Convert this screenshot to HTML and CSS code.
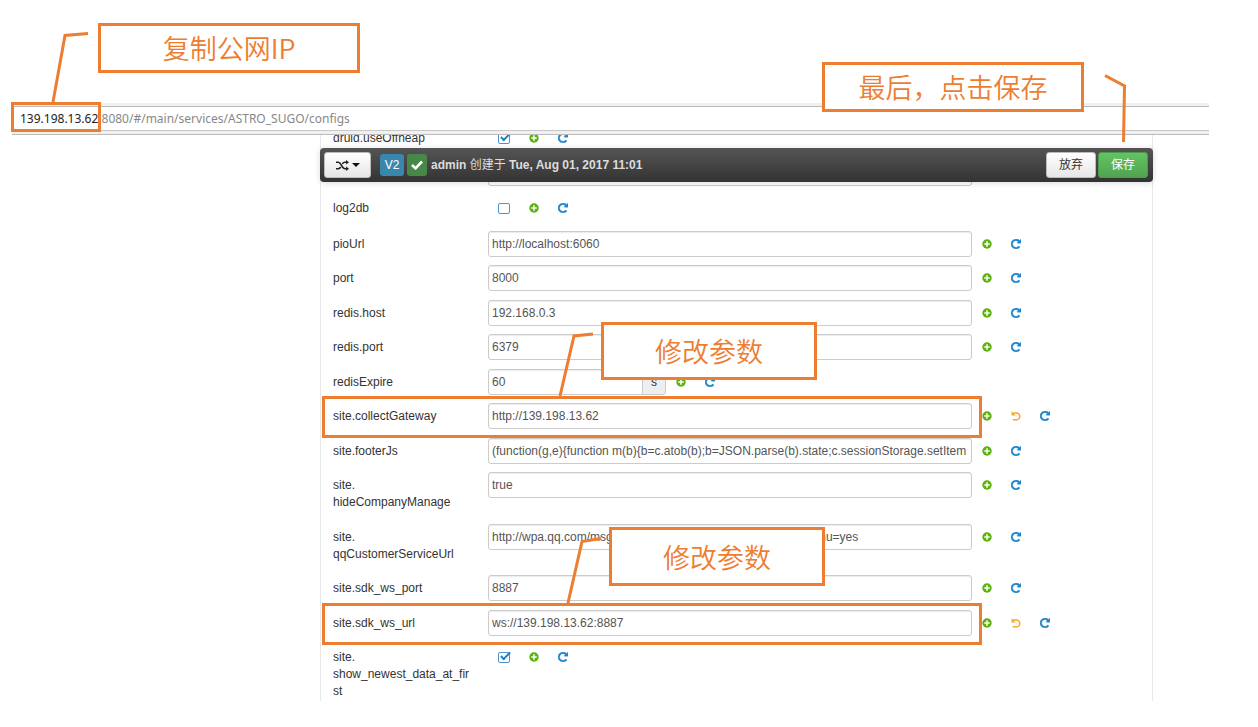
FILE: index.html
```html
<!DOCTYPE html>
<html lang="zh-CN">
<head>
<meta charset="utf-8">
<title>ASTRO_SUGO configs</title>
<link rel="stylesheet" href="styles.css">
</head>
<body>
<svg class="sprite" aria-hidden="true">
  <symbol id="plus" viewBox="0 0 10 10"><circle cx="5" cy="5" r="4.700"/><path d="M5 2.300v5.400M2.300 5h5.400" stroke="#fff" stroke-width="1.500"/></symbol>
  <symbol id="redo" viewBox="128 128 1536 1536"><path stroke="currentColor" stroke-width="60" d="M1664 256v448q0 26-19 45t-45 19h-448q-42 0-59-40-17-39 14-69l138-138q-148-137-349-137-104 0-198.500 40.500t-163.500 109.500-109.500 163.500-40.500 198.500 40.500 198.500 109.500 163.500 163.500 109.500 198.500 40.500q119 0 225-52t179-147q7-10 23-12 15 0 25 9l137 138q9 8 9.500 20.500t-7.500 22.500q-109 132-264 204.500t-327 72.500q-156 0-298-61t-245-164-164-245-61-298 61-298 164-245 245-164 298-61q147 0 284.500 55.500t244.500 156.500l130-129q29-31 70-14 39 17 39 59z"/></symbol>
  <symbol id="undo" viewBox="0 0 10 10"><path d="M2 2H5.400a3.400 3.400 0 0 1 0 6.800H1.800" fill="none" stroke="currentColor" stroke-width="1.600"/><path d="M.5.200v4.300h4.300z"/></symbol>
</svg>

<div class="address">
  <div class="url"><span class="host">139.198.13.62</span>:8080/#/main/services/ASTRO_SUGO/configs</div>
</div>

<main class="panel">
  <header class="toolbar">
    <button class="btn compare" aria-label="比较">
      <svg width="13" height="11" viewBox="0 0 12 10" fill="none" stroke="#222" stroke-width="1.500"><path d="M0 2h2.200c2.800 0 3 6 6 6H10M0 8h2.200c1 0 1.600-.7 2.100-1.600M5.800 3.500C6.400 2.600 7 2 8.200 2H10"/><path d="M9.300 0v4l2.700-2zM9.300 6v4L12 8z" fill="#222" stroke="none"/></svg>
      <span class="caret"></span>
    </button>
    <span class="tag version">V2</span>
    <span class="tag current"><svg width="12" height="10" viewBox="0 0 12 10"><path d="M1 5l3.500 3.300L11 1.500" fill="none" stroke="#fff" stroke-width="2.600"/></svg></span>
    <span class="created"><b>admin</b> 创建于 <b>Tue, Aug 01, 2017 11:01</b></span>
    <button class="btn discard">放弃</button>
    <button class="btn save">保存</button>
  </header>

  <div class="clip">
  <form class="rows">
    <div class="row"><label for="f1">druid.useOffheap</label><span class="check"><input id="f1" type="checkbox" checked></span>
      <button type="button" class="icon add" aria-label="add"><svg><use href="#plus"/></svg></button><button type="button" class="icon redo" aria-label="refresh"><svg><use href="#redo"/></svg></button></div>
    <div class="row"><span class="name"></span><input class="field" aria-label="value" type="text"></div>
    <div class="row tall"><label for="f3">log2db</label><span class="check"><input id="f3" type="checkbox"></span>
      <button type="button" class="icon add" aria-label="add"><svg><use href="#plus"/></svg></button><button type="button" class="icon redo" aria-label="refresh"><svg><use href="#redo"/></svg></button></div>
    <div class="row"><label for="f4">pioUrl</label><input id="f4" class="field" type="text" value="http://localhost:6060">
      <button type="button" class="icon add" aria-label="add"><svg><use href="#plus"/></svg></button><button type="button" class="icon redo" aria-label="refresh"><svg><use href="#redo"/></svg></button></div>
    <div class="row"><label for="f5">port</label><input id="f5" class="field" type="text" value="8000">
      <button type="button" class="icon add" aria-label="add"><svg><use href="#plus"/></svg></button><button type="button" class="icon redo" aria-label="refresh"><svg><use href="#redo"/></svg></button></div>
    <div class="row"><label for="f6">redis.host</label><input id="f6" class="field" type="text" value="192.168.0.3">
      <button type="button" class="icon add" aria-label="add"><svg><use href="#plus"/></svg></button><button type="button" class="icon redo" aria-label="refresh"><svg><use href="#redo"/></svg></button></div>
    <div class="row"><label for="f7">redis.port</label><input id="f7" class="field" type="text" value="6379">
      <button type="button" class="icon add" aria-label="add"><svg><use href="#plus"/></svg></button><button type="button" class="icon redo" aria-label="refresh"><svg><use href="#redo"/></svg></button></div>
    <div class="row"><label for="f8">redisExpire</label><input id="f8" class="field short" type="text" value="60"><span class="unit">s</span>
      <button type="button" class="icon add" aria-label="add"><svg><use href="#plus"/></svg></button><button type="button" class="icon redo" aria-label="refresh"><svg><use href="#redo"/></svg></button></div>
    <div class="row marked"><label for="f9">site.collectGateway</label><input id="f9" class="field" type="text" value="http://139.198.13.62">
      <button type="button" class="icon add" aria-label="add"><svg><use href="#plus"/></svg></button><button type="button" class="icon undo" aria-label="undo"><svg><use href="#undo"/></svg></button><button type="button" class="icon redo" aria-label="refresh"><svg><use href="#redo"/></svg></button></div>
    <div class="row"><label for="f10">site.footerJs</label><input id="f10" class="field" type="text" value="(function(g,e){function m(b){b=c.atob(b);b=JSON.parse(b).state;c.sessionStorage.setItem">
      <button type="button" class="icon add" aria-label="add"><svg><use href="#plus"/></svg></button><button type="button" class="icon redo" aria-label="refresh"><svg><use href="#redo"/></svg></button></div>
    <div class="row"><label for="f11">site.<wbr>hideCompanyManage</label><input id="f11" class="field" type="text" value="true">
      <button type="button" class="icon add" aria-label="add"><svg><use href="#plus"/></svg></button><button type="button" class="icon redo" aria-label="refresh"><svg><use href="#redo"/></svg></button></div>
    <div class="row"><label for="f12">site.<wbr>qqCustomerServiceUrl</label><input id="f12" class="field" type="text" value="http://wpa.qq.com/msgrd?v=3&amp;uin=2454134718&amp;site=qq&amp;menu=yes">
      <button type="button" class="icon add" aria-label="add"><svg><use href="#plus"/></svg></button><button type="button" class="icon redo" aria-label="refresh"><svg><use href="#redo"/></svg></button></div>
    <div class="row"><label for="f13">site.sdk_ws_port</label><input id="f13" class="field" type="text" value="8887">
      <button type="button" class="icon add" aria-label="add"><svg><use href="#plus"/></svg></button><button type="button" class="icon redo" aria-label="refresh"><svg><use href="#redo"/></svg></button></div>
    <div class="row marked"><label for="f14">site.sdk_ws_url</label><input id="f14" class="field" type="text" value="ws://139.198.13.62:8887">
      <button type="button" class="icon add" aria-label="add"><svg><use href="#plus"/></svg></button><button type="button" class="icon undo" aria-label="undo"><svg><use href="#undo"/></svg></button><button type="button" class="icon redo" aria-label="refresh"><svg><use href="#redo"/></svg></button></div>
    <div class="row"><label for="f15">site.<wbr>show_newest_data_at_first</label><span class="check"><input id="f15" type="checkbox" checked></span>
      <button type="button" class="icon add" aria-label="add"><svg><use href="#plus"/></svg></button><button type="button" class="icon redo" aria-label="refresh"><svg><use href="#redo"/></svg></button></div>
  </form>
  </div>
</main>

<svg class="leaders" width="1258" height="727" viewBox="0 0 1258 727" aria-hidden="true">
  <path d="M53 102L65 35.500 88 33.500M1105 75.500L1124.500 86 1123.500 142M560 396L574 336 593 334M568 603L582 541.500 601 538.500"/>
</svg>
<div class="callout host-frame"></div>
<div class="callout copy-ip">复制公网IP</div>
<div class="callout save-last">最后，点击保存</div>
<div class="callout edit-gateway">修改参数</div>
<div class="callout edit-ws">修改参数</div>
</body>
</html>
```
FILE: styles.css
```css
*, *::before, *::after { box-sizing: border-box; }
body {
  margin: 0;
  padding: 103px 0 26px;
  min-height: 100vh;
  position: relative;
  display: flex;
  flex-direction: column;
  background: #fff;
  color: #333;
  font: 12px/17px "Liberation Sans", "Noto Sans CJK SC", sans-serif;
}
.sprite { position: absolute; width: 0; height: 0; }
button, input { font: inherit; margin: 0; }

.address {
  margin: 0 49px 0 12px;
  border-top: 3px solid #f0f0f0;
  border-bottom: 1px solid #bbb;
  background: #f0f0f0;
  padding-bottom: 3px;
}
.url {
  height: 25px;
  padding-left: 8px;
  border-top: 1px solid #bbb;
  border-bottom: 1px solid #c8c8c8;
  background: #fff;
  color: #888;
  font: 12px/24px "Noto Sans", sans-serif;
}
.host { color: #222; }

.panel {
  position: relative;
  flex: 1;
  display: flex;
  flex-direction: column;
  margin: 0 105px 0 320px;
  border: solid #e8e8e8;
  border-width: 0 1px;
}
.clip { flex: 1; display: flex; overflow: hidden; }
.rows {
  flex: 1;
  display: flex;
  flex-direction: column;
  justify-content: space-between;
  margin: -10px 0 -3px;
  padding-left: 12px;
}
.row { position: relative; display: flex; align-items: flex-start; }
.tall { min-height: 28px; align-items: center; }
label, .name {
  flex: none;
  width: 138px;
  margin-right: 17px;
  padding: 5px 0 4px;
  overflow-wrap: anywhere;
}
.field {
  flex: 0 1 484px;
  min-width: 0;
  height: 26px;
  padding: 0 3px;
  border: 1px solid #ccc;
  border-radius: 3px;
  background: #fff;
  box-shadow: inset 0 1px 1px rgba(0, 0, 0, .08);
  color: #555;
}
.short { flex-basis: 155px; border-radius: 3px 0 0 3px; }
.unit {
  width: 24px;
  height: 26px;
  margin-left: -1px;
  border: 1px solid #ccc;
  border-radius: 0 3px 3px 0;
  background: #eee;
  line-height: 24px;
  text-align: center;
}
.icon {
  flex: none;
  width: 29px;
  height: 26px;
  padding: 0 0 0 1px;
  border: 0;
  background: none;
  display: grid;
  place-items: center;
}
.icon svg { width: 10px; height: 10px; fill: currentColor; }
.add { color: #5ab30c; }
.redo { color: #1e86cc; }
.undo { color: #f8a828; }

.check { display: flex; align-items: center; width: 31px; height: 26px; padding-left: 10px; }
.check input {
  position: relative;
  appearance: none;
  width: 12px;
  height: 11px;
  border: 1px solid #4c93d0;
  border-radius: 2px;
  background: #fff;
}
.check input:checked::after {
  content: "";
  position: absolute;
  left: 4px;
  top: -3px;
  width: 5px;
  height: 10px;
  border: solid #1a80c8;
  border-width: 0 2px 2px 0;
  transform: rotate(45deg);
}

.toolbar {
  position: absolute;
  z-index: 2;
  left: -1px;
  right: -1px;
  top: 13px;
  height: 34px;
  display: flex;
  align-items: center;
  padding: 0 5px 0 4px;
  border-radius: 4px;
  background: linear-gradient(#555, #333);
  box-shadow: 0 1px 6px rgba(0, 0, 0, .15);
  color: #ddd;
}
.btn {
  height: 26px;
  width: 50px;
  padding: 0;
  border: 1px solid #bbb;
  border-radius: 3px;
  background: linear-gradient(#fff, #e6e6e6);
  color: #333;
}
.compare { width: 47px; display: flex; align-items: center; justify-content: center; gap: 3px; margin-right: 9px; }
.caret { border: solid transparent; border-width: 4px 4px 0; border-top-color: #111; }
.tag {
  height: 22px;
  border-radius: 3px;
  display: grid;
  place-items: center;
  color: #fff;
}
.version { width: 24px; margin-right: 3px; background: #3a87ad; }
.current { width: 20px; margin-right: 4px; background: #468847; }
.discard { margin-left: auto; margin-right: 2px; }
.save { border-color: #4a9c4a; background: linear-gradient(#62c462, #51a351); color: #fff; }

.leaders { position: absolute; left: 0; top: 0; z-index: 3; pointer-events: none; }
.leaders path { fill: none; stroke: #ed7d31; stroke-width: 3; }
.callout {
  position: absolute;
  z-index: 4;
  display: grid;
  place-items: center;
  border: 3px solid #ed7d31;
  background: #fff;
  color: #ed7d31;
  font: 350 27px/40px "Noto Sans CJK SC", sans-serif;
}
.host-frame { left: 11px; top: 102px; width: 90px; height: 30px; background: none; }
.copy-ip { left: 98px; top: 23px; width: 262px; height: 50px; }
.save-last { left: 822px; top: 62px; width: 262px; height: 50px; }
.edit-gateway { left: 601px; top: 322px; width: 216px; height: 58px; }
.edit-ws { left: 609px; top: 527px; width: 216px; height: 59px; }
.marked::before {
  content: "";
  position: absolute;
  z-index: 1;
  left: -11px;
  top: -7px;
  width: 660px;
  height: 42px;
  border: 3px solid #ed7d31;
  pointer-events: none;
}
```
